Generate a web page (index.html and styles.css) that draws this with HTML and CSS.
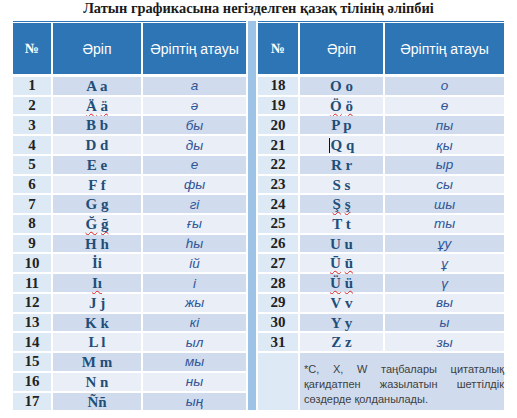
FILE: index.html
```html
<!DOCTYPE html>
<html lang="kk">

<head>
    <meta charset="UTF-8">
    <meta name="viewport" content="width=device-width, initial-scale=1.0">
    <title>Латын графикасына негізделген қазақ тілінің әліпбиі</title>
    <link rel="stylesheet" href="styles.css">
</head>

<body>
    <h1 class="title">Латын графикасына негізделген қазақ тілінің әліпбиі</h1>

    <div class="alphabet">
        <div class="table left">
            <div class="row head">
                <div class="cell num">№</div>
                <div class="cell">Әріп</div>
                <div class="cell">Әріптің атауы</div>
            </div>
            <div class="row"><div class="cell num">1</div><div class="cell letter">A a</div><div class="cell name">а</div></div>
            <div class="row"><div class="cell num">2</div><div class="cell letter"><span class="typo">Ä</span> <span class="typo">ä</span></div><div class="cell name">ә</div></div>
            <div class="row"><div class="cell num">3</div><div class="cell letter">B b</div><div class="cell name">бы</div></div>
            <div class="row"><div class="cell num">4</div><div class="cell letter">D d</div><div class="cell name">ды</div></div>
            <div class="row"><div class="cell num">5</div><div class="cell letter">E e</div><div class="cell name">е</div></div>
            <div class="row"><div class="cell num">6</div><div class="cell letter">F f</div><div class="cell name">фы</div></div>
            <div class="row"><div class="cell num">7</div><div class="cell letter">G g</div><div class="cell name">гі</div></div>
            <div class="row"><div class="cell num">8</div><div class="cell letter"><span class="typo">Ğ</span> <span class="typo">ğ</span></div><div class="cell name">ғы</div></div>
            <div class="row"><div class="cell num">9</div><div class="cell letter">H h</div><div class="cell name">һы</div></div>
            <div class="row"><div class="cell num">10</div><div class="cell letter">İi</div><div class="cell name">ій</div></div>
            <div class="row"><div class="cell num">11</div><div class="cell letter"><span class="typo">Iı</span></div><div class="cell name">і</div></div>
            <div class="row"><div class="cell num">12</div><div class="cell letter">J j</div><div class="cell name">жы</div></div>
            <div class="row"><div class="cell num">13</div><div class="cell letter">K k</div><div class="cell name">кі</div></div>
            <div class="row"><div class="cell num">14</div><div class="cell letter">L l</div><div class="cell name">ыл</div></div>
            <div class="row"><div class="cell num">15</div><div class="cell letter">M m</div><div class="cell name">мы</div></div>
            <div class="row"><div class="cell num">16</div><div class="cell letter">N n</div><div class="cell name">ны</div></div>
            <div class="row"><div class="cell num">17</div><div class="cell letter"><span class="typo">Ññ</span></div><div class="cell name">ың</div></div>
        </div>

        <div class="divider"></div>

        <div class="table right">
            <div class="row head">
                <div class="cell num">№</div>
                <div class="cell">Әріп</div>
                <div class="cell">Әріптің атауы</div>
            </div>
            <div class="row"><div class="cell num">18</div><div class="cell letter">O o</div><div class="cell name">о</div></div>
            <div class="row"><div class="cell num">19</div><div class="cell letter"><span class="typo">Ö</span> <span class="typo">ö</span></div><div class="cell name">ө</div></div>
            <div class="row"><div class="cell num">20</div><div class="cell letter">P p</div><div class="cell name">пы</div></div>
            <div class="row"><div class="cell num">21</div><div class="cell letter"><span class="caret"></span>Q q</div><div class="cell name">қы</div></div>
            <div class="row"><div class="cell num">22</div><div class="cell letter">R r</div><div class="cell name">ыр</div></div>
            <div class="row"><div class="cell num">23</div><div class="cell letter">S s</div><div class="cell name">сы</div></div>
            <div class="row"><div class="cell num">24</div><div class="cell letter"><span class="typo">Ş</span> <span class="typo">ş</span></div><div class="cell name">шы</div></div>
            <div class="row"><div class="cell num">25</div><div class="cell letter">T t</div><div class="cell name">ты</div></div>
            <div class="row"><div class="cell num">26</div><div class="cell letter">U u</div><div class="cell name">ұу</div></div>
            <div class="row"><div class="cell num">27</div><div class="cell letter"><span class="typo">Ū</span> <span class="typo">ū</span></div><div class="cell name">ұ</div></div>
            <div class="row"><div class="cell num">28</div><div class="cell letter"><span class="typo">Ü</span> <span class="typo">ü</span></div><div class="cell name">ү</div></div>
            <div class="row"><div class="cell num">29</div><div class="cell letter">V v</div><div class="cell name">вы</div></div>
            <div class="row"><div class="cell num">30</div><div class="cell letter">Y y</div><div class="cell name">ы</div></div>
            <div class="row"><div class="cell num">31</div><div class="cell letter">Z z</div><div class="cell name">зы</div></div>
            <div class="row">
                <div class="cell num span3"></div>
                <div class="cell note">*C, X, W таңбалары цитаталық қағидатпен жазылатын шеттілдік сөздерде қолданылады.</div>
            </div>
        </div>
    </div>
</body>

</html>
```

FILE: styles.css
```css
body {
    margin: 0;
    background: #fff;
    font-family: "Liberation Sans", Arial, sans-serif;
}

.title {
    margin: 0 0 4px;
    height: 17px;
    font-family: "Liberation Serif", "Times New Roman", serif;
    font-size: 14.4px;
    line-height: 17px;
    font-weight: bold;
    text-align: center;
    color: #1a1a1a;
}

.alphabet {
    display: flex;
    padding-left: 13px;
}

.table {
    display: grid;
    grid-template-rows: 52px repeat(17, 17.73px);
    gap: 2px;
    border-top: 1px solid #2e75b6;
    padding-top: 1px;
}

.table.left {
    grid-template-columns: 38px 88px 103px;
}

.table.right {
    grid-template-columns: 40px 83px 119px;
}

.divider {
    width: 8px;
    margin: 0 2px;
    background: #9dc3e6;
}

.row {
    display: contents;
}

.cell {
    display: flex;
    align-items: center;
    justify-content: center;
    background: #e9eef7;
}

.row:nth-child(even) .cell {
    background: #d0dcee;
}

.row .cell.num {
    background: #dde9f5;
    font-family: "Liberation Serif", "Times New Roman", serif;
    font-weight: bold;
    font-size: 15px;
    color: #222;
}

.row.head .cell {
    align-self: start;
    height: 51px;
    background: #2e75b6;
    color: #fff;
    font-size: 14px;
}

.row.head .cell.num {
    background: #2e75b6;
    color: #fff;
}

.cell.letter {
    display: block;
    text-align: center;
    line-height: 18px;
    font-family: "Liberation Serif", "Times New Roman", serif;
    font-weight: bold;
    font-size: 15px;
    color: #1f4e79;
    white-space: pre;
}

.name {
    font-style: italic;
    font-size: 13.5px;
    color: #2f5496;
}

.typo {
    text-decoration: underline wavy #e01b1b;
    text-decoration-thickness: 1px;
    text-underline-offset: 2px;
    text-decoration-skip-ink: none;
}

.caret {
    display: inline-block;
    width: 1px;
    height: 15px;
    margin-right: 1px;
    vertical-align: -3px;
    background: #111;
}

.span3 {
    grid-row: span 3;
}

.row .cell.note {
    grid-column: span 2;
    grid-row: span 3;
    display: block;
    padding: 9px 0 0 4px;
    font-size: 11px;
    line-height: 15px;
    text-align: justify;
    color: #404040;
}
```
